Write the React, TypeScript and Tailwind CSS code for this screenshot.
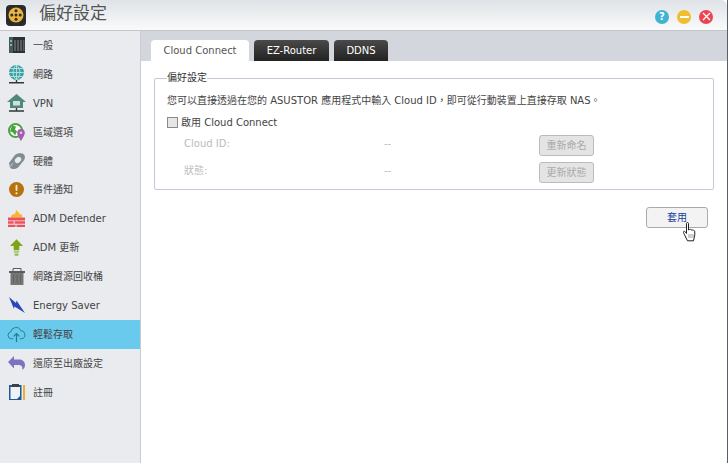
import React from 'react';

const IconGeneral = () => (
  <svg width="16" height="16" viewBox="0 0 16 16">
    <rect width="16" height="16" fill="#2c3133" />
    <rect width="4" height="16" fill="#46595b" />
    <rect x="1" y="3" width="2" height="2" fill="#7fb0b2" />
    <rect x="1" y="7" width="2" height="2" fill="#7fb0b2" />
    <path d="M5 3h2v11H5zM8 3h2v11H8zM11 3h2v11h-2zM14 3h1.500v11H14z" fill="#5a5e60" />
  </svg>
);

const IconGlobe = () => (
  <svg width="17" height="19" viewBox="0 0 17 19">
    <circle cx="8.500" cy="7.500" r="7.500" fill="#3ea3a5" />
    <path d="M1 7.500h15M8.500 0v15M2.500 3.500h12M2.500 11.500h12M8.500 0C4 4 4 11 8.500 15M8.500 0C13 4 13 11 8.500 15" fill="none" stroke="#c9e8e8" strokeWidth=".8" />
    <path d="M8.500 15v2.500M1 17.800h15" stroke="#30383a" strokeWidth="1.400" />
  </svg>
);

const IconVpn = () => (
  <svg width="19" height="18" viewBox="0 0 19 18">
    <path d="M9.500 0L19 8h-3v6H3V8H0z" fill="#4f8a78" />
    <rect x="6" y="7" width="7" height="4.500" fill="#cfe0da" />
    <path d="M9.500 14v2.500M2 17h15" stroke="#30383a" strokeWidth="1.400" />
  </svg>
);

const IconRegion = () => (
  <svg width="18" height="18" viewBox="0 0 18 18">
    <circle cx="7.500" cy="7.500" r="6.500" fill="#fff" stroke="#4aa33f" strokeWidth="2" />
    <path d="M4 2.500l4 1-1 3 2 2-2 4-2-3-3-1z" fill="#4aa33f" />
    <path d="M13 6a3.800 3.800 0 0 1 3.800 3.800C16.800 12.500 13 18 13 18s-3.800-5.500-3.800-8.200A3.800 3.800 0 0 1 13 6z" fill="#a05fa8" />
    <circle cx="13" cy="9.800" r="1.300" fill="#e6cbe8" />
  </svg>
);

const IconHardware = () => (
  <svg width="16" height="17" viewBox="0 0 16 17">
    <path d="M0 10L6 2c2-2 7-2.500 9-.5 1.500 2 1 5-1 7l-5 6c-3 2-6 2-8 0z" fill="#7f8c92" />
    <path d="M1 14L4 10" stroke="#a4aeb3" strokeWidth="1.500" />
    <ellipse cx="9" cy="7" rx="3.500" ry="2.600" transform="rotate(-40 9 7)" fill="#e9ebef" />
  </svg>
);

const IconAlert = () => (
  <svg width="15" height="15" viewBox="0 0 16 16">
    <circle cx="8" cy="8" r="8" fill="#b5720f" />
    <rect x="7" y="3" width="2" height="6.500" rx="1" fill="#f5e6cf" />
    <circle cx="8" cy="12" r="1.200" fill="#f5e6cf" />
  </svg>
);

const IconFirewall = () => (
  <svg width="17" height="17" viewBox="0 0 18 18">
    <path d="M3 8c0-2 2-3 3-4l1 1 2-5c1 2 3 3 4 5l1-1c1 1 1 3 1 4z" fill="#f5b52e" />
    <path d="M0 8h18v3H0zM0 12h6v2.500H0zM7 12h11v2.500H7zM0 15.500h8V18H0zM9 15.500h9V18H9z" fill="#f0505a" />
  </svg>
);

const IconUpdate = () => (
  <svg width="13" height="17" viewBox="0 0 14 18">
    <path d="M7 0l7 7.500H10V12H4V7.500H0z" fill="#7ea516" />
    <path d="M4 13h6v1.500H4zM5 15.500h4V18H5z" fill="#9ab84a" />
  </svg>
);

const IconTrash = () => (
  <svg width="16" height="17" viewBox="0 0 16 17">
    <path d="M0 3h16v2H0z" fill="#5c5c5c" />
    <path d="M4 3V.5h8V3" fill="none" stroke="#5c5c5c" strokeWidth="1" />
    <path d="M1.500 5h13v12h-13z" fill="#757575" />
    <path d="M4.500 7v8M8 7v8M11.500 7v8" stroke="#626262" strokeWidth="1" />
  </svg>
);

const IconEnergy = () => (
  <svg width="17" height="16" viewBox="0 0 17 16">
    <path d="M1 0l7 6 .5-2.500L17 16 6.500 9.500 6 12z" fill="#2a46b8" />
  </svg>
);

const IconCloud = () => (
  <svg width="19" height="17" viewBox="0 0 20 17" fill="none" stroke="#1d7f8c" strokeWidth="1">
    <path d="M6.500 13H4.500a3.700 3.700 0 0 1-.5-7.300A5.500 5.500 0 0 1 14.500 4.500 4.300 4.300 0 0 1 15.500 13h-2" />
    <path d="M10 16.500V8M7 10.500L10 7.500l3 3" strokeWidth="1.300" />
  </svg>
);

const IconRestore = () => (
  <svg width="17" height="14" viewBox="0 0 17 14">
    <path d="M6 0v3.500h5c4 0 6 2.500 6 5.500 0 2-1 4-3 5 1-2 0-5-3-5H6v3.500L0 6z" fill="#7d72c0" />
  </svg>
);

const IconRegister = () => (
  <svg width="16" height="16" viewBox="0 0 16 16">
    <rect x="0" y="1" width="12.500" height="15" fill="#1f5a98" />
    <path d="M1.500 3h9.500v9l-3 3H1.500z" fill="#eef1f6" />
    <rect x="3" y="0" width="7" height="3" fill="#3b4048" />
    <rect x="14" y="1" width="2" height="15" fill="#eab12e" />
  </svg>
);

const navItems: { label: string; icon: React.ReactNode; active?: boolean }[] = [
  { label: '一般', icon: <IconGeneral /> },
  { label: '網路', icon: <IconGlobe /> },
  { label: 'VPN', icon: <IconVpn /> },
  { label: '區域選項', icon: <IconRegion /> },
  { label: '硬體', icon: <IconHardware /> },
  { label: '事件通知', icon: <IconAlert /> },
  { label: 'ADM Defender', icon: <IconFirewall /> },
  { label: 'ADM 更新', icon: <IconUpdate /> },
  { label: '網路資源回收桶', icon: <IconTrash /> },
  { label: 'Energy Saver', icon: <IconEnergy /> },
  { label: '輕鬆存取', icon: <IconCloud />, active: true },
  { label: '還原至出廠設定', icon: <IconRestore /> },
  { label: '註冊', icon: <IconRegister /> },
];

const App: React.FC = () => {
  return (
    <div className="w-[728px] h-[463px] flex flex-col overflow-hidden bg-white border-r border-[#5b6066] text-[10px] text-[#333] font-['DejaVu_Sans','Noto_Sans_CJK_TC',sans-serif]">
      {/* title bar */}
      <div className="h-[31px] shrink-0 flex items-center bg-gradient-to-b from-[#dfe3e7] to-[#fafafb] border-b border-[#c3c7cc] rounded-tr-[6px]">
        <div className="ml-[6px] w-[20px] h-[21px] rounded-[4px] bg-[#2b2b2b] flex items-center justify-center">
          <svg width="16" height="16" viewBox="0 0 16 16">
            <circle cx="8" cy="8" r="7.500" fill="#eab53a" />
            <circle cx="8" cy="8" r="1.500" fill="#2b2b2b" />
            <circle cx="8" cy="3.800" r="1.500" fill="#2b2b2b" />
            <circle cx="8" cy="12.200" r="1.500" fill="#2b2b2b" />
            <circle cx="3.800" cy="8" r="1.500" fill="#2b2b2b" />
            <circle cx="12.200" cy="8" r="1.500" fill="#2b2b2b" />
          </svg>
        </div>
        <span className="ml-[13px] mb-[2px] text-[17px] text-[#555]">偏好設定</span>
        <div className="ml-auto mr-[14px] mt-[3px] flex gap-[8px]">
          <div className="w-[14px] h-[14px] rounded-full bg-[#3fb4d2] text-white text-[10px] font-bold leading-[14px] text-center">?</div>
          <div className="w-[14px] h-[14px] rounded-full bg-[#f0bd31] flex items-center justify-center">
            <div className="w-[9px] h-[2px] bg-white" />
          </div>
          <div className="w-[14px] h-[14px] rounded-full bg-[#ec4452] flex items-center justify-center">
            <svg width="9" height="9" viewBox="0 0 9 9">
              <path d="M1 1l7 7M8 1L1 8" stroke="#fff" strokeWidth="1.300" />
            </svg>
          </div>
        </div>
      </div>

      <div className="flex-1 flex min-h-0">
        {/* sidebar */}
        <div className="w-[141px] shrink-0 bg-[#e9ebef] border-r border-[#c9ccd2]">
          {navItems.map((item) => (
            <div
              key={item.label}
              className={`h-[28.9px] flex items-center ${item.active ? 'bg-[#69caee]' : ''}`}
            >
              <div className="w-[33px] flex justify-center shrink-0">{item.icon}</div>
              <span className="text-[10px] text-[#444]">{item.label}</span>
            </div>
          ))}
        </div>

        {/* content */}
        <div className="flex-1 flex flex-col min-w-0">
          <div className="h-[30px] shrink-0 bg-[#d3d6dc] flex items-end pl-[10px] gap-[5px] text-[10px]">
            <div className="w-[98px] h-[21px] bg-white rounded-t-[4px] flex items-center justify-center text-[#555]">Cloud Connect</div>
            <div className="w-[75px] h-[21px] bg-gradient-to-b from-[#4a4a4a] to-[#222] rounded-t-[4px] flex items-center justify-center text-white">EZ-Router</div>
            <div className="w-[54px] h-[21px] bg-gradient-to-b from-[#4a4a4a] to-[#222] rounded-t-[4px] flex items-center justify-center text-white">DDNS</div>
          </div>

          <div className="flex-1 px-[13px] pt-[11px]">
            <fieldset className="border border-[#c6c8d8] rounded-[2px] h-[118px] pl-[12px] pr-[12px]">
              <legend className="text-[10px] text-[#333] leading-[12px]">偏好設定</legend>
              <p className="mt-[10px] leading-[14px] text-[#444] whitespace-nowrap">您可以直接透過在您的 ASUSTOR 應用程式中輸入 Cloud ID，即可從行動裝置上直接存取 NAS。</p>
              <label className="mt-[7px] flex items-center h-[14px]">
                <span className="w-[11px] h-[11px] border border-[#8a8a8a] bg-[#e6e6e6]" />
                <span className="ml-[3px] text-[#444]">啟用 Cloud Connect</span>
              </label>
              <div className="mt-[2px] flex items-center h-[28px] text-[#bbb]">
                <span className="ml-[17px] w-[200px] mb-[4px]">Cloud ID:</span>
                <span className="w-[155px] mb-[4px]">--</span>
                <button className="w-[55px] h-[21px] rounded-[3px] border border-[#bbb] bg-[#e4e4e4] text-[#aaa] text-[10px]">重新命名</button>
              </div>
              <div className="flex items-center h-[27px] text-[#bbb]">
                <span className="ml-[17px] w-[200px] mb-[4px]">狀態:</span>
                <span className="w-[155px] mb-[4px]">--</span>
                <button className="w-[55px] h-[21px] rounded-[3px] border border-[#bbb] bg-[#e4e4e4] text-[#aaa] text-[10px]">更新狀態</button>
              </div>
            </fieldset>

            <div className="relative mt-[17px] flex justify-end pr-[6px]">
              <button className="w-[62px] h-[21px] rounded-[3px] border border-[#aaa] bg-[#f3f3f3] text-[#1a3fa0] text-[10px]">套用</button>
              <svg className="absolute left-[528px] top-[15px]" width="16" height="20" viewBox="0 0 15 20">
                <path d="M4 1.500c0-1.300 2-1.300 2 0V8l1-.5c.8-.3 1.500 0 1.700.4.700-.3 1.400-.1 1.700.4.800-.2 1.600.2 1.800 1 .3 2 .2 4-.4 6l-.8 3.500H5l-3-6c-.6-1.300-1.200-2.500-1-3 .3-.8 1.300-.6 1.800 0L4 11.500z" fill="#fff" stroke="#222" strokeWidth="1" />
                <path d="M6.500 12v4M8.500 12v4M10.500 12v4" stroke="#777" strokeWidth=".7" />
              </svg>
            </div>
          </div>
        </div>
      </div>
    </div>
  );
};

export default App;
